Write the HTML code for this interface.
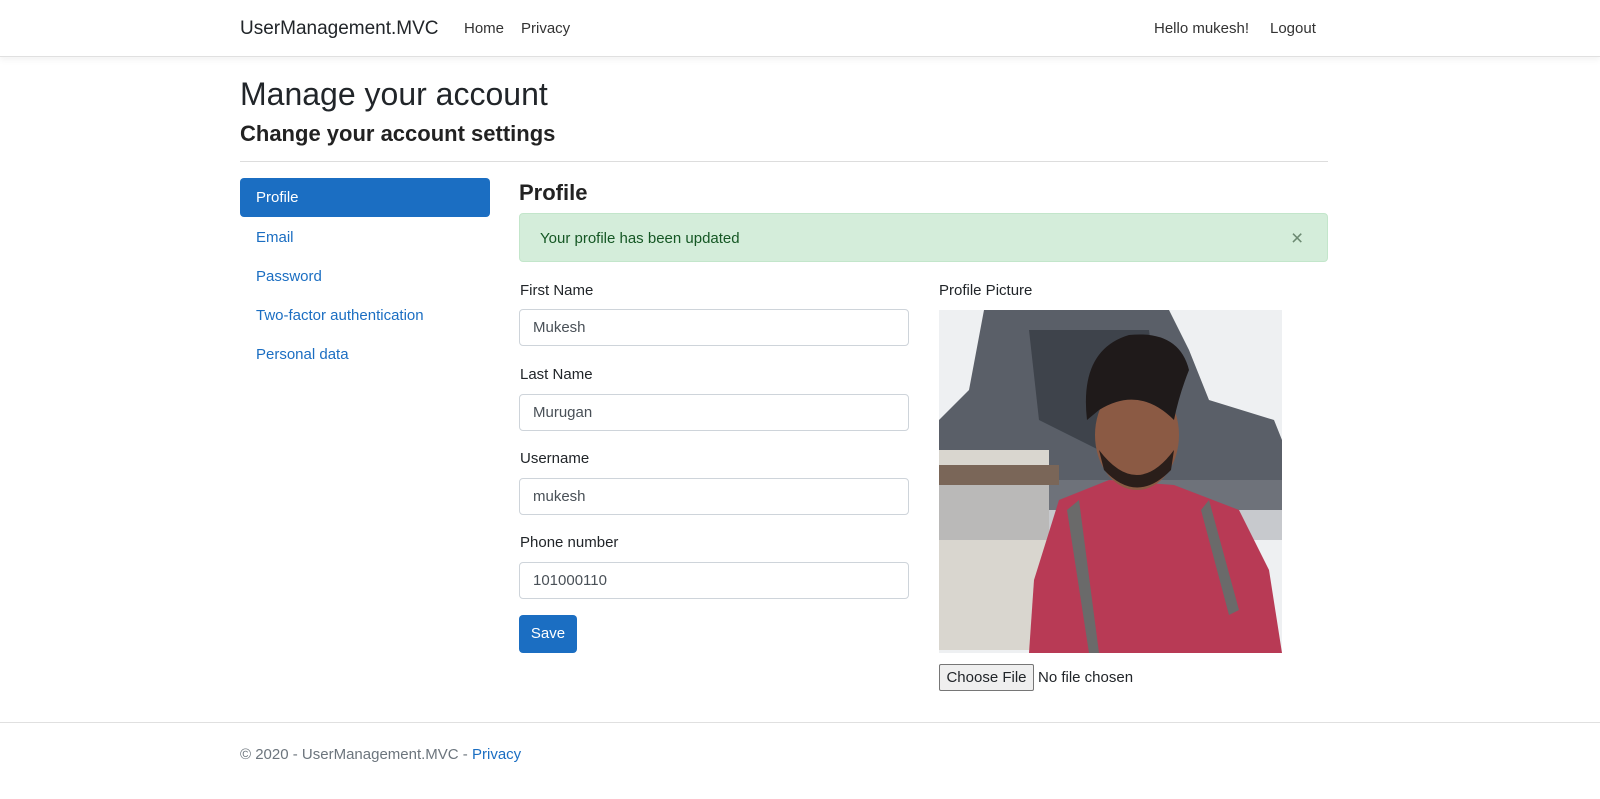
<!DOCTYPE html>
<html><head><meta charset="utf-8"><style>
*{box-sizing:border-box;margin:0;padding:0}
body{width:1600px;height:799px;background:#fff;font-family:"Liberation Sans",sans-serif;color:#212529;position:relative;overflow:hidden}
.a{position:absolute;white-space:nowrap}
.nav{position:absolute;left:0;top:0;width:1600px;height:57px;border-bottom:1px solid #e0e0e0;box-shadow:0 3px 6px rgba(0,0,0,.05)}
.in{position:absolute;border:1px solid #ced4da;border-radius:4px;width:390px;height:37px;padding:9px 13px;font-size:15px;color:#495057}
.lbl{font-size:15px}
.lnk{color:#1b6ec2;font-size:15px}
</style></head><body>
<div class="nav"></div>
<div class="a" style="left:240px;top:18px;font-size:19px;color:#212529">UserManagement.MVC</div>
<div class="a" style="left:464px;top:20px;font-size:15px;color:#333">Home</div>
<div class="a" style="left:521px;top:20px;font-size:15px;color:#333">Privacy</div>
<div class="a" style="left:1154px;top:20px;font-size:15px;color:#333">Hello mukesh!</div>
<div class="a" style="left:1270px;top:20px;font-size:15px;color:#333">Logout</div>
<div class="a" style="left:240px;top:76px;font-size:32px;font-weight:500">Manage your account</div>
<div class="a" style="left:240px;top:121px;font-size:22px;font-weight:bold;color:#222">Change your account settings</div>
<div class="a" style="left:240px;top:161px;width:1088px;border-top:1px solid #ddd"></div>
<div class="a" style="left:240px;top:178px;width:250px;height:39px;background:#1b6ec2;border-radius:4px"></div>
<div class="a" style="left:256px;top:189px;font-size:15px;color:#fff">Profile</div>
<div class="a lnk" style="left:256px;top:229px">Email</div>
<div class="a lnk" style="left:256px;top:268px">Password</div>
<div class="a lnk" style="left:256px;top:307px">Two-factor authentication</div>
<div class="a lnk" style="left:256px;top:346px">Personal data</div>
<div class="a" style="left:519px;top:180px;font-size:22px;font-weight:bold;color:#222">Profile</div>
<div class="a" style="left:519px;top:213px;width:809px;height:49px;background:#d4edda;border:1px solid #c3e6cb;border-radius:4px"></div>
<div class="a" style="left:540px;top:230px;font-size:15px;color:#155724">Your profile has been updated</div>
<div class="a" style="left:1291px;top:227px;font-size:21px;color:#6c8a72">×</div>
<div class="a lbl" style="left:520px;top:282px">First Name</div>
<div class="in" style="left:519px;top:309px">Mukesh</div>
<div class="a lbl" style="left:520px;top:366px">Last Name</div>
<div class="in" style="left:519px;top:394px">Murugan</div>
<div class="a lbl" style="left:520px;top:450px">Username</div>
<div class="in" style="left:519px;top:478px">mukesh</div>
<div class="a lbl" style="left:520px;top:534px">Phone number</div>
<div class="in" style="left:519px;top:562px">101000110</div>
<div class="a" style="left:519px;top:615px;width:58px;height:38px;background:#1b6ec2;border-radius:4px;color:#fff;font-size:15px;text-align:center;line-height:38px">Save</div>
<div class="a lbl" style="left:939px;top:282px">Profile Picture</div>
<svg class="a" style="left:939px;top:310px" width="343" height="343" viewBox="0 0 343 343">
<rect width="343" height="343" fill="#eef0f2"/>
<path d="M45 0 L230 0 L250 40 L270 90 L335 110 L343 130 L343 200 L0 200 L0 110 L30 80 Z" fill="#5a5f68"/>
<path d="M90 20 L210 20 L220 100 L160 140 L100 110 Z" fill="#3e434b"/>
<rect x="0" y="140" width="110" height="200" fill="#d9d6cf"/>
<rect x="0" y="170" width="343" height="60" fill="#8b8f96" opacity=".4"/>
<rect x="0" y="155" width="120" height="20" fill="#7a6658"/>
<path d="M95 270 L120 190 L170 170 L235 175 L300 200 L330 260 L343 343 L90 343 Z" fill="#b83a55"/>
<path d="M140 190 L160 343 L150 343 L128 200 Z M270 190 L300 300 L290 305 L262 200 Z" fill="#6a6a6a"/>
<ellipse cx="198" cy="125" rx="42" ry="55" fill="#8b5a44"/>
<path d="M148 110 Q140 40 190 25 Q240 20 250 60 Q240 85 235 110 Q200 75 160 100 Z" fill="#1f1a1a"/>
<path d="M160 140 Q198 190 235 140 L232 160 Q198 195 165 160 Z" fill="#2a1e1a"/>
</svg>
<div class="a" style="left:939px;top:664px;width:95px;height:27px;background:#efefef;border:1px solid #767676;border-radius:2px;font-size:15px;text-align:center;line-height:25px">Choose File</div>
<div class="a" style="left:1038px;top:669px;font-size:15px">No file chosen</div>
<div class="a" style="left:0;top:722px;width:1600px;border-top:1px solid #e0e0e0"></div>
<div class="a" style="left:240px;top:746px;font-size:15px;color:#6c757d">© 2020 - UserManagement.MVC - <span style="color:#1b6ec2">Privacy</span></div>
</body></html>
